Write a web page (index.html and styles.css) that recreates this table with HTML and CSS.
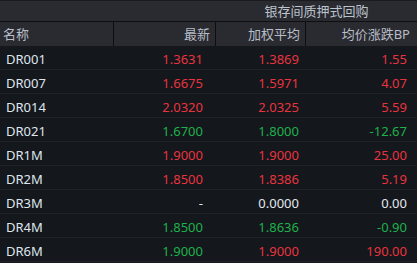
FILE: index.html
```html
<!DOCTYPE html>
<html lang="zh">
<head>
<meta charset="utf-8">
<link rel="stylesheet" href="styles.css">
</head>
<body>
<div class="board">
  <div class="title-row">
    <div class="title-spacer"></div>
    <div class="title">银存间质押式回购</div>
  </div>
  <div class="head-row">
    <div class="c name">名称</div>
    <div class="c v1">最新</div>
    <div class="c v2">加权平均</div>
    <div class="c v3">均价涨跌BP</div>
  </div>
  <div class="row"><div class="c name">DR001</div><div class="c v1 up">1.3631</div><div class="c v2 up">1.3869</div><div class="c v3 up">1.55</div></div>
  <div class="row"><div class="c name">DR007</div><div class="c v1 up">1.6675</div><div class="c v2 up">1.5971</div><div class="c v3 up">4.07</div></div>
  <div class="row"><div class="c name">DR014</div><div class="c v1 up">2.0320</div><div class="c v2 up">2.0325</div><div class="c v3 up">5.59</div></div>
  <div class="row"><div class="c name">DR021</div><div class="c v1 down">1.6700</div><div class="c v2 down">1.8000</div><div class="c v3 down">-12.67</div></div>
  <div class="row"><div class="c name">DR1M</div><div class="c v1 up">1.9000</div><div class="c v2 up">1.9000</div><div class="c v3 up">25.00</div></div>
  <div class="row"><div class="c name">DR2M</div><div class="c v1 up">1.8500</div><div class="c v2 up">1.8386</div><div class="c v3 up">5.19</div></div>
  <div class="row"><div class="c name">DR3M</div><div class="c v1 flat">-</div><div class="c v2 flat">0.0000</div><div class="c v3 flat">0.00</div></div>
  <div class="row"><div class="c name">DR4M</div><div class="c v1 down">1.8500</div><div class="c v2 down">1.8636</div><div class="c v3 down">-0.90</div></div>
  <div class="row"><div class="c name">DR6M</div><div class="c v1 down">1.9000</div><div class="c v2 up">1.9000</div><div class="c v3 up">190.00</div></div>
</div>
</body>
</html>
```
FILE: styles.css
```css
* { box-sizing: border-box; }
html, body {
  margin: 0;
  padding: 0;
  background: #14171c;
}
body {
  width: 417px;
  height: 263px;
  overflow: hidden;
  font-family: "Noto Sans", "Noto Sans CJK SC", sans-serif;
  font-size: 13px;
}
.board {
  display: flex;
  flex-direction: column;
}
.title-row {
  display: grid;
  grid-template-columns: 216px 1fr;
  height: 22px;
  background: #2a2a31;
  border-top: 1px solid #1a1a1f;
  border-bottom: 1px solid #0e0e11;
}
.title {
  color: #bcc3cc;
  text-align: center;
  line-height: 20px;
}
.head-row, .row {
  display: grid;
  grid-template-columns: 114px 102px 90px 1fr;
}
.head-row {
  height: 24px;
  background: #2a2a31;
  color: #b7bec8;
}
.head-row .c {
  line-height: 24px;
  border-right: 1px solid #0e0e11;
  padding-right: 5px;
  text-align: right;
}
.head-row .c:last-child { border-right: none; padding-right: 7px; }
.head-row .name { text-align: left; padding-left: 3px; }
.row {
  height: 24px;
  border-bottom: 1px solid #20232a;
}
.row .c {
  line-height: 20px;
  padding-top: 3px;
  text-align: right;
}
.row .name { text-align: left; padding-left: 6px; color: #dfe6ee; }
.row .v1 { padding-right: 13px; }
.row .v2 { padding-right: 7px; }
.row .v3 { padding-right: 10px; }
.up { color: #e8343f; }
.down { color: #1fb14b; }
.flat { color: #e3e8ee; }
```
